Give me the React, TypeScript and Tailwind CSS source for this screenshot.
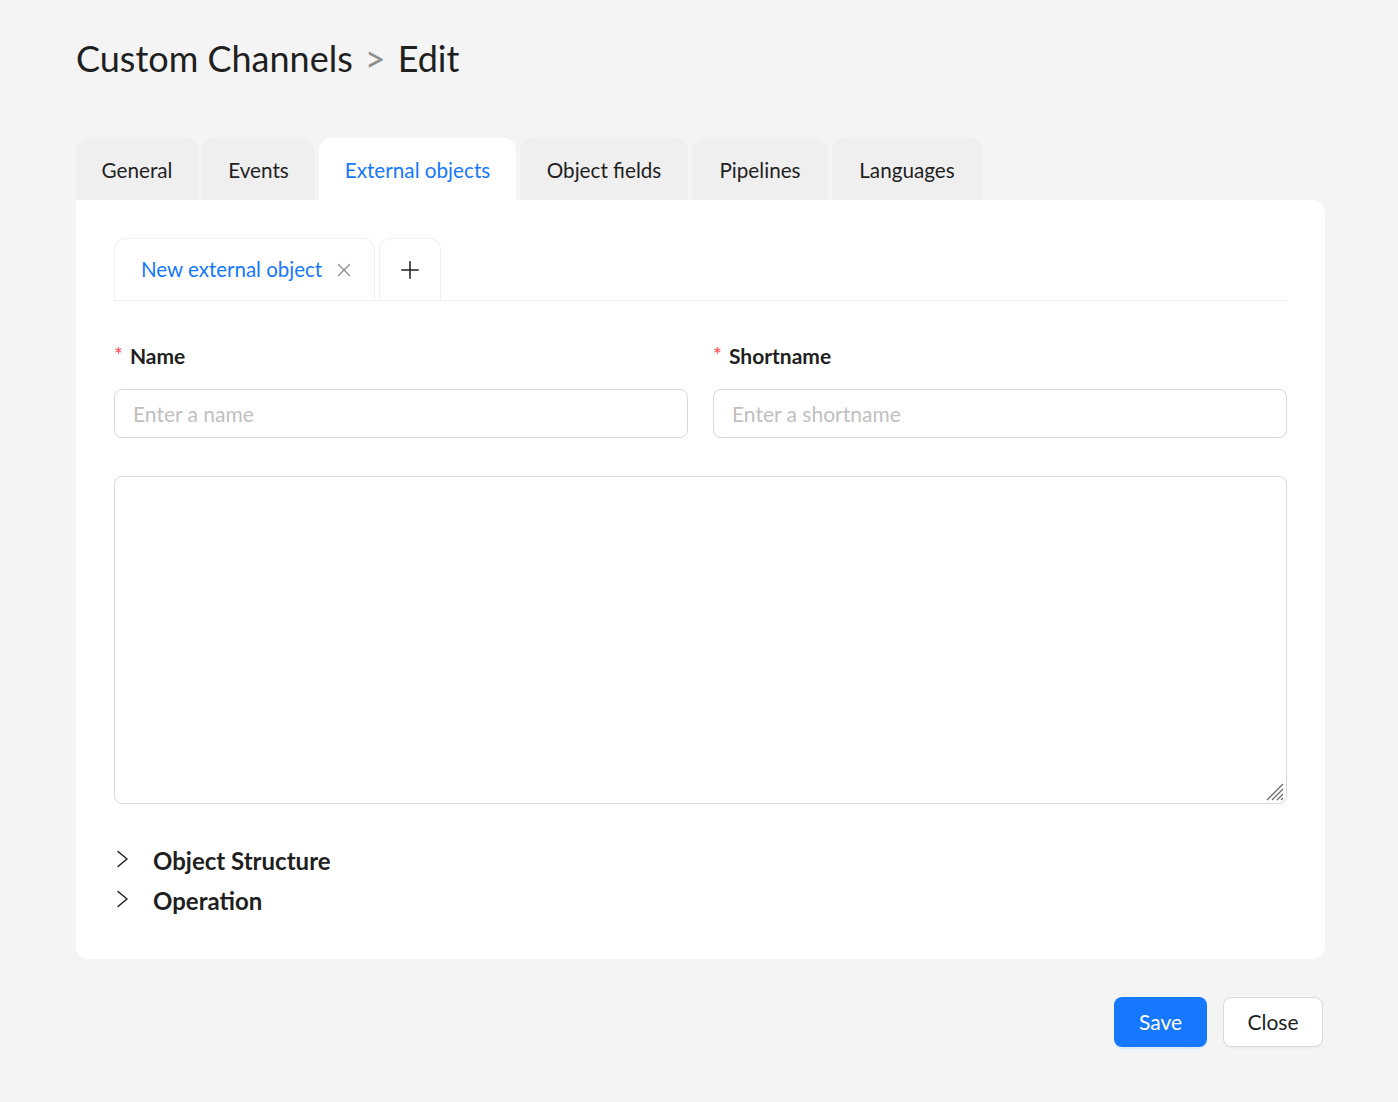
import * as React from "react"
import { X, Plus } from "lucide-react"

const tabs = [
  { label: "General", w: "w-[122px]" },
  { label: "Events", w: "w-[113px]" },
  { label: "External objects", w: "w-[197px]" },
  { label: "Object fields", w: "w-[168px]" },
  { label: "Pipelines", w: "w-[136px]" },
  { label: "Languages", w: "w-[150px]" },
]

function Chevron() {
  return (
    <svg width="14" height="18" viewBox="0 0 14 18" fill="none" className="text-[#1f1f1f]">
      <path d="M2 1.5 L11 9 L2 16.5" stroke="currentColor" strokeWidth="1.5" strokeLinecap="round" strokeLinejoin="round" />
    </svg>
  )
}

export default function App() {
  const [active, setActive] = React.useState("External objects")

  return (
    <div className="min-h-screen bg-[#f4f4f4] pl-[76px] pr-[73px] pt-[34px] pb-[55px] font-['Lato',sans-serif] text-[#1f1f1f]">
      <h1 className="text-[36px] leading-[48px] flex items-center">
        <span>Custom Channels</span>
        <span className="mx-[12px] text-[#8c8c8c]">&gt;</span>
        <span>Edit</span>
      </h1>

      {/* top tabs */}
      <div className="mt-[56px] flex gap-[4px]">
        {tabs.map((t) => (
          <button
            key={t.label}
            onClick={() => setActive(t.label)}
            className={
              t.w +
              " h-[62px] pt-[3px] rounded-t-[12px] text-[20.7px] " +
              (t.label === active ? "bg-white text-[#1677ff]" : "bg-[#efefef] text-[#1f1f1f]")
            }
          >
            {t.label}
          </button>
        ))}
      </div>

      <div className="bg-white rounded-b-[12px] rounded-tr-[12px] px-[38px] pt-[38px] pb-[42px]">
        {/* inner tabs */}
        <div className="flex gap-[4px] border-b border-[#f0f0f0]">
          <div className="h-[62px] w-[261px] -mb-px pl-[26px] pr-[19px] flex items-center justify-between border border-b-0 border-[#f0f0f0] rounded-t-[12px] bg-white">
            <span className="text-[20.5px] text-[#1677ff]">New external object</span>
            <X className="w-[22px] h-[22px] text-[#8c8c8c]" strokeWidth={1.4} />
          </div>
          <div className="h-[62px] w-[62px] flex items-center justify-center border border-b-0 border-[#f0f0f0] rounded-t-[12px]">
            <Plus className="w-[28px] h-[28px] text-[#1f1f1f]" strokeWidth={1.3} />
          </div>
        </div>

        {/* name fields */}
        <div className="mt-[39px] grid grid-cols-2 gap-[25px]">
          {[
            ["Name", "Enter a name"],
            ["Shortname", "Enter a shortname"],
          ].map(([label, ph]) => (
            <div key={label}>
              <label className="flex items-center text-[21px] font-bold leading-[32px]">
                <span className="text-[#ff4d4f] font-normal mr-[7px] text-[21px] mt-[-2px]">*</span>
                {label}
              </label>
              <input
                placeholder={ph}
                className="mt-[17px] w-full h-[49px] rounded-[8px] border border-[#d9d9d9] px-[18px] text-[21px] placeholder:text-[#bfbfbf] outline-none"
              />
            </div>
          ))}
        </div>

        <div className="relative mt-[38px]">
          <textarea className="block w-full h-[328px] rounded-[8px] border border-[#d9d9d9] outline-none resize-none p-[12px] text-[20px]" />
          <svg width="20" height="20" viewBox="0 0 20 20" className="absolute right-[3px] bottom-[3px] pointer-events-none">
            <path d="M19 3 L3 19 M19 8 L8 19 M19 13 L13 19 M19 17 L17 19" stroke="#6b6b6b" strokeWidth="1.3" />
          </svg>
        </div>

        {/* collapse items */}
        <div className="mt-[41px] flex flex-col gap-[8px]">
          {["Object Structure", "Operation"].map((s) => (
            <div key={s} className="flex items-center h-[32px]">
              <div className="mt-[-5px] ml-[2px]">
                <Chevron />
              </div>
              <span className="ml-[23px] text-[24px] font-bold">{s}</span>
            </div>
          ))}
        </div>
      </div>

      <div className="mt-[38px] flex justify-end gap-[16px] pr-[2px]">
        <button className="h-[50px] w-[93px] rounded-[8px] bg-[#1677ff] text-white text-[21px] shadow-[0_2px_0_rgba(5,145,255,0.1)]">
          Save
        </button>
        <button className="h-[50px] w-[100px] rounded-[8px] bg-white border border-[#d9d9d9] text-[21px] shadow-[0_2px_0_rgba(0,0,0,0.02)]">
          Close
        </button>
      </div>
    </div>
  )
}
